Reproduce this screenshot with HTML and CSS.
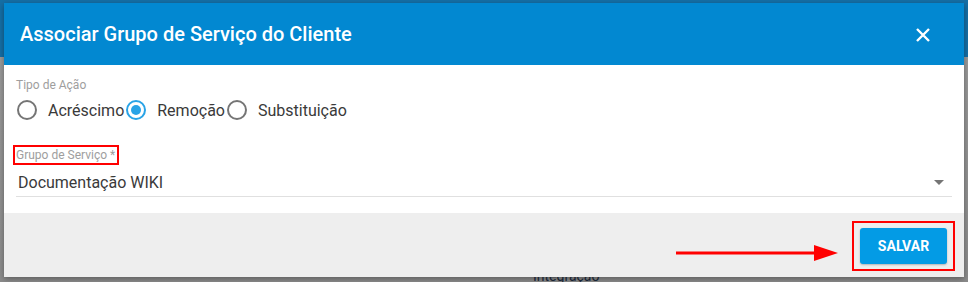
FILE: index.html
```html
<!DOCTYPE html>
<html lang="pt-BR">
<head>
  <meta charset="UTF-8">
  <title>Associar Grupo de Serviço do Cliente</title>
  <link rel="stylesheet" href="styles.css">
</head>
<body>
<div class="backdrop">
  <span class="behind-text">Integração</span>
  <div class="dialog">
    <div class="dialog-header">
      <h1>Associar Grupo de Serviço do Cliente</h1>
      <svg class="close" width="14" height="14" viewBox="0 0 14 14">
        <path d="M1 1 L13 13 M13 1 L1 13" stroke="#fff" stroke-width="2.4" fill="none"/>
      </svg>
    </div>
    <div class="dialog-body">
      <div class="field-label">Tipo de Ação</div>
      <div class="radio-group">
        <label class="radio"><span class="circle"></span><span class="radio-text">Acréscimo</span></label>
        <label class="radio"><span class="circle checked"></span><span class="radio-text">Remoção</span></label>
        <label class="radio"><span class="circle"></span><span class="radio-text">Substituição</span></label>
      </div>
      <div class="select-field">
        <div class="field-label highlight">Grupo de Serviço *</div>
        <div class="select-value">
          <span>Documentação WIKI</span>
          <span class="caret"></span>
        </div>
      </div>
    </div>
    <div class="dialog-footer">
      <svg class="arrow" width="162" height="18" viewBox="0 0 162 18">
        <line x1="0" y1="9" x2="142" y2="9" stroke="#f00" stroke-width="3"/>
        <polygon points="138,1 162,9 138,17" fill="#f00"/>
      </svg>
      <div class="highlight-box">
        <button class="btn-save">SALVAR</button>
      </div>
    </div>
  </div>
</div>
</body>
</html>
```

FILE: styles.css
```css
body {
  margin: 0;
  font-family: Roboto, "Noto Sans", sans-serif;
  background: linear-gradient(#156fa6 0, #156fa6 57px, #9a9a9a 57px, #8c8c8c 100%);
  height: 282px;
  overflow: hidden;
}
.backdrop {
  position: relative;
  padding: 3px 4px 0 4px;
  height: 279px;
}
.behind-text {
  position: absolute;
  left: 533px;
  top: 268px;
  font-size: 14px;
  color: #1c2a3c;
}
.dialog {
  position: relative;
  width: 960px;
  background: #fff;
  box-shadow: 0 2px 6px rgba(0, 0, 0, 0.35);
}
.dialog-header {
  background: #0288d1;
  height: 62px;
  display: flex;
  align-items: center;
  justify-content: space-between;
  padding: 0 34px 0 16px;
}
.dialog-header h1 {
  margin: 0;
  color: #fff;
  font-size: 20px;
  font-weight: 500;
  padding-bottom: 1px;
}
.close {
  margin-top: 1px;
}
.dialog-body {
  padding: 13px 12px 16px 12px;
}
.field-label {
  font-size: 12px;
  color: #9e9e9e;
  line-height: 14px;
}
.radio-group {
  display: flex;
  align-items: center;
  margin-top: 8px;
  margin-left: 1px;
}
.radio {
  display: flex;
  align-items: center;
  font-size: 16px;
  color: #3a3a3a;
}
.circle {
  width: 16px;
  height: 16px;
  border: 2px solid #757575;
  border-radius: 50%;
  margin-right: 11px;
  box-sizing: content-box;
  position: relative;
}
.circle.checked {
  border-color: #29a3e6;
}
.circle.checked::after {
  content: "";
  position: absolute;
  left: 3px;
  top: 3px;
  width: 10px;
  height: 10px;
  border-radius: 50%;
  background: #29a3e6;
}
.radio-text {
  margin-right: 2px;
}
.select-field {
  margin-top: 24px;
}
.field-label.highlight {
  display: inline-block;
  border: 2px solid #f00;
  padding: 1px 2px 1px 1px;
  margin-left: -3px;
}
.select-value {
  display: flex;
  justify-content: space-between;
  align-items: center;
  font-size: 16px;
  color: #3a3a3a;
  padding: 5px 8px 4px 2px;
  border-bottom: 1px solid #e0e0e0;
  margin-top: 3px;
}
.caret {
  width: 0;
  height: 0;
  border-left: 5px solid transparent;
  border-right: 5px solid transparent;
  border-top: 5px solid #757575;
}
.dialog-footer {
  background: #eeeeee;
  height: 64px;
  display: flex;
  justify-content: flex-end;
  align-items: flex-start;
  padding: 8px 9px 0 0;
  box-sizing: border-box;
}
.arrow {
  margin-top: 23px;
  margin-right: 14px;
}
.highlight-box {
  border: 2px solid #f00;
  padding: 5px 6px;
}
.btn-save {
  background: #039be5;
  color: #fff;
  border: none;
  border-radius: 3px;
  font-family: Roboto, sans-serif;
  font-weight: 700;
  font-size: 14px;
  width: 87px;
  height: 36px;
  box-shadow: 0 1px 2px rgba(0, 0, 0, 0.25);
}
```
